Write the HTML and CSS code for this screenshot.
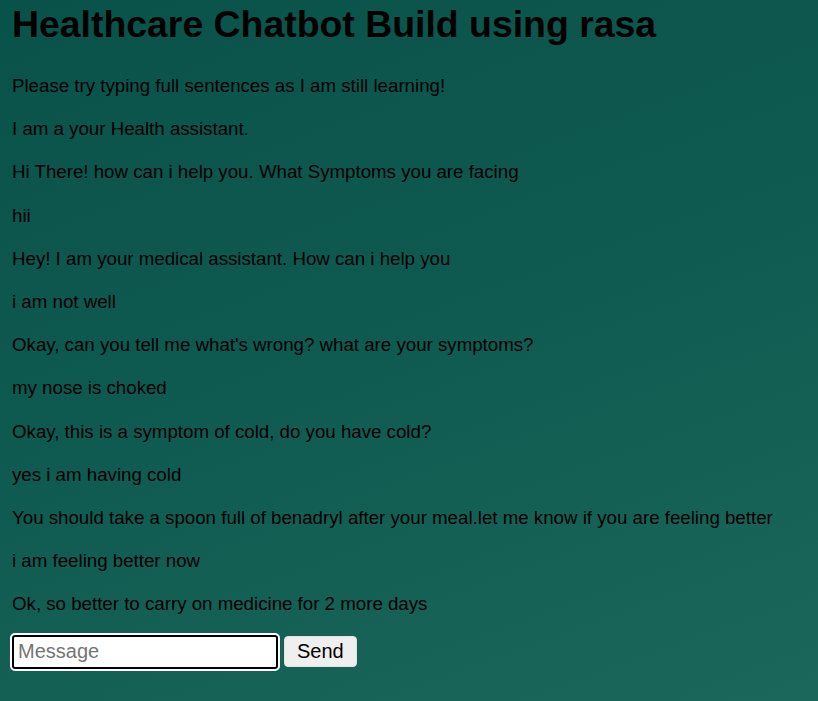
FILE: index.html
```html
<!DOCTYPE html>
<html>
<head>
<meta charset="utf-8">
<link rel="stylesheet" href="styles.css">
</head>
<body>
<h1 class="title">Healthcare Chatbot Build using rasa</h1>
<div class="chat">
<p class="msg">Please try typing full sentences as I am still learning!</p>
<p class="msg">I am a your Health assistant.</p>
<p class="msg">Hi There! how can i help you. What Symptoms you are facing</p>
<p class="msg">hii</p>
<p class="msg">Hey! I am your medical assistant. How can i help you</p>
<p class="msg">i am not well</p>
<p class="msg">Okay, can you tell me what's wrong? what are your symptoms?</p>
<p class="msg">my nose is choked</p>
<p class="msg">Okay, this is a symptom of cold, do you have cold?</p>
<p class="msg">yes i am having cold</p>
<p class="msg">You should take a spoon full of benadryl after your meal.let me know if you are feeling better</p>
<p class="msg">i am feeling better now</p>
<p class="msg">Ok, so better to carry on medicine for 2 more days</p>
</div>
<form class="composer">
<input class="input" type="text" placeholder="Message">
<button class="send" type="button">Send</button>
</form>
</body>
</html>
```
FILE: styles.css
```css
html { height: 100%; }
body {
  margin: 0;
  padding: 0 12px;
  min-height: 100%;
  box-sizing: border-box;
  font-family: "Liberation Sans", Arial, sans-serif;
  color: #000;
  background: linear-gradient(160deg, #09524a 0%, #0f5a50 45%, #1c675b 100%);
  background-attachment: fixed;
}
.title {
  margin: 0;
  padding-top: 4px;
  font-size: 37.4px;
  line-height: 41px;
  font-weight: bold;
}
.chat { padding-top: 30px; }
.msg {
  margin: 0 0 22px 0;
  font-size: 18.7px;
  line-height: 21.2px;
}
.composer {
  display: flex;
  align-items: center;
  gap: 6px;
  margin-top: -2px;
}
.input {
  width: 254px;
  height: 30px;
  box-sizing: content-box;
  padding: 0 4px;
  font-family: inherit;
  font-size: 20px;
  border: 2px solid #000;
  border-radius: 3px;
  outline: 2px solid #fff;
  background: #fff;
}
.input::placeholder { color: #757575; }
.send {
  height: 31px;
  padding: 0 12px;
  font-family: inherit;
  font-size: 20px;
  background: #efefef;
  border: 1px solid #e2e2e2;
  border-radius: 4px;
  color: #000;
}
```
